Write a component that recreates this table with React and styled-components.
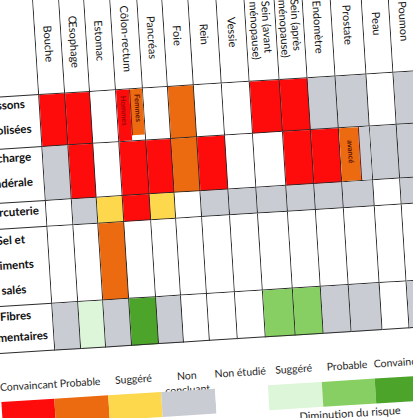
import React from "react";
import styled, { createGlobalStyle } from "styled-components";

const GlobalStyle = createGlobalStyle`
  html, body {
    margin: 0;
    padding: 0;
    background: #ffffff;
    overflow: hidden;
  }
  body {
    font-family: Lato, "Open Sans", "Liberation Sans", sans-serif;
  }
`;

const colors = {
  R: "#fe0b0b",
  O: "#ec6a10",
  Y: "#fdd84c",
  G: "#c9cdd3",
  W: "#ffffff",
  LG: "#ddf5d9",
  MG: "#88cf63",
  DG: "#4da42a",
};

const line = "#2a2a2a";
const widths = [26, 25, 26, 27, 25, 26, 28, 28, 30, 28, 28, 31, 27, 27];

const organs = [
  ["Bouche"],
  ["Œsophage"],
  ["Estomac"],
  ["Côlon-rectum"],
  ["Pancréas"],
  ["Foie"],
  ["Rein"],
  ["Vessie"],
  ["Sein (avant", "ménopause)"],
  ["Sein (après", "ménopause)"],
  ["Endomètre"],
  ["Prostate"],
  ["Peau"],
  ["Poumon"],
];

const rows = [
  {
    label: ["Boissons", "alcoolisées"],
    h: 52,
    pb: 11,
    cells: ["R", "R", "W", "colon", "W", "O", "W", "W", "R", "R", "G", "G", "W", "G"],
  },
  {
    label: ["Surcharge", "pondérale"],
    h: 54,
    pb: 11,
    cells: ["G", "R", "W", "R", "R", "O", "R", "W", "W", "R", "R", "prostate", "G", "G"],
  },
  {
    label: ["Charcuterie"],
    h: 25.5,
    pb: 7,
    cells: ["W", "G", "Y", "R", "Y", "W", "G", "G", "G", "G", "G", "G", "W", "G"],
  },
  {
    label: ["Sel et", "aliments", "salés"],
    h: 77,
    pb: 4,
    cells: ["W", "W", "O", "W", "W", "W", "W", "W", "W", "W", "W", "W", "W", "W"],
  },
  {
    label: ["Fibres", "alimentaires"],
    h: 47,
    pb: 6,
    lh: 21,
    cells: ["G", "LG", "G", "DG", "G", "W", "W", "W", "MG", "MG", "G", "G", "W", "G"],
  },
];

const legend = [
  { text: ["Convaincant"], fill: "R" },
  { text: ["Probable"], fill: "O" },
  { text: ["Suggéré"], fill: "Y" },
  { text: ["Non", "concluant"], fill: "G" },
  { text: ["Non étudié"], fill: "W" },
  { text: ["Suggéré"], fill: "LG" },
  { text: ["Probable"], fill: "MG" },
  { text: ["Convaincant"], fill: "DG" },
];

const Page = styled.div`
  width: 413px;
  height: 418px;
  overflow: hidden;
  background: #ffffff;
`;

const Sheet = styled.div`
  width: 460px;
  margin-left: -42px;
  margin-top: -1px;
  transform-origin: 0 0;
  transform: rotate(-3.6deg);
`;

const Table = styled.div`
  display: grid;
  grid-template-columns: 74px ${widths.map((w) => `${w}px`).join(" ")};
  grid-template-rows: 100px ${rows.map((r) => `${r.h}px`).join(" ")};
  border-top: 1px solid ${line};
  border-left: 1px solid ${line};
  width: max-content;
`;

const Corner = styled.div`
  border-right: 1px solid ${line};
  border-bottom: 1px solid ${line};
  background: #ffffff;
`;

const HeaderCell = styled.div`
  display: flex;
  align-items: center;
  justify-content: center;
  border-right: 1px solid ${line};
  border-bottom: 1px solid ${line};
  background: #ffffff;
  overflow: visible;
`;

const HeaderText = styled.span`
  writing-mode: vertical-rl;
  font-size: 11px;
  line-height: 12px;
  color: #161616;
  white-space: nowrap;
`;

const RowLabel = styled.div`
  display: flex;
  flex-direction: column;
  align-items: center;
  justify-content: center;
  padding-bottom: ${(p) => p.$pb}px;
  box-sizing: border-box;
  border-right: 1px solid ${line};
  border-bottom: 1px solid ${line};
  font-size: 11.5px;
  font-weight: 700;
  line-height: ${(p) => p.$lh}px;
  color: #111111;
  white-space: nowrap;
`;

const Cell = styled.div`
  background: ${(p) => colors[p.$fill]};
  border-right: 1px solid ${line};
  border-bottom: 1px solid ${line};
`;

const SplitCell = styled.div`
  display: flex;
  background: #ffffff;
  border-right: 1px solid ${line};
  border-bottom: 1px solid ${line};
`;

const Part = styled.div`
  flex: ${(p) => p.$grow} 1 0;
  min-width: 0;
  display: flex;
  align-items: center;
  justify-content: center;
  padding-bottom: ${(p) => p.$lift || 0}px;
  box-sizing: border-box;
  background: ${(p) => colors[p.$fill]};
  margin-bottom: ${(p) => p.$gap || 0}px;
  border-left: ${(p) => (p.$edge ? `1px solid #7a1a0a` : "none")};
`;

const Note = styled.span`
  flex-shrink: 0;
  transform: rotate(90deg);
  font-size: 7.5px;
  line-height: 8px;
  font-weight: 700;
  color: ${(p) => p.$ink};
  white-space: nowrap;
`;

const Legend = styled.div`
  display: grid;
  grid-template-columns: repeat(8, 53.5px);
  grid-template-rows: 25.5px 25px auto;
  margin: 23px 0 0 17.5px;
`;

const LegendLabel = styled.div`
  padding-top: 3px;
  text-align: center;
  font-size: 10.5px;
  line-height: 14px;
  color: #262626;
  white-space: nowrap;
`;

const Swatch = styled.div`
  background: ${(p) => colors[p.$fill]};
`;

const Caption = styled.div`
  grid-column: 6 / span 3;
  text-align: center;
  font-size: 11px;
  line-height: 14px;
  color: #262626;
  padding-top: 1px;
`;

function Lines({ parts }) {
  return parts.map((t, i) => (
    <React.Fragment key={i}>
      {i > 0 && <br />}
      {t}
    </React.Fragment>
  ));
}

function DataCell({ kind }) {
  if (kind === "colon") {
    return (
      <SplitCell>
        <Part $grow={1} $fill="R" $lift={10}>
          <Note $ink="#a00808">Hommes</Note>
        </Part>
        <Part $grow={1} $fill="O" $gap={5} $edge $lift={8}>
          <Note $ink="#6a1208">Femmes</Note>
        </Part>
      </SplitCell>
    );
  }
  if (kind === "prostate") {
    return (
      <SplitCell>
        <Part $grow={2} $fill="O" $lift={6}>
          <Note $ink="#5a1406">avancé</Note>
        </Part>
        <Part $grow={1} $fill="G" $edge />
      </SplitCell>
    );
  }
  return <Cell $fill={kind} />;
}

export default function App() {
  return (
    <Page>
      <GlobalStyle />
      <Sheet>
        <Table>
          <Corner />
          {organs.map((o) => (
            <HeaderCell key={o.join(" ")}>
              <HeaderText>
                <Lines parts={o} />
              </HeaderText>
            </HeaderCell>
          ))}
          {rows.map((r) => (
            <React.Fragment key={r.label.join(" ")}>
              <RowLabel $pb={r.pb} $lh={r.lh || 25}>
                {r.label.map((t) => (
                  <span key={t}>{t}</span>
                ))}
              </RowLabel>
              {r.cells.map((c, i) => (
                <DataCell key={i} kind={c} />
              ))}
            </React.Fragment>
          ))}
        </Table>
        <Legend>
          {legend.map((l, i) => (
            <LegendLabel key={`l${i}`}>
              <Lines parts={l.text} />
            </LegendLabel>
          ))}
          {legend.map((l, i) => (
            <Swatch key={`s${i}`} $fill={l.fill} />
          ))}
          <Caption>Diminution du risque</Caption>
        </Legend>
      </Sheet>
    </Page>
  );
}
